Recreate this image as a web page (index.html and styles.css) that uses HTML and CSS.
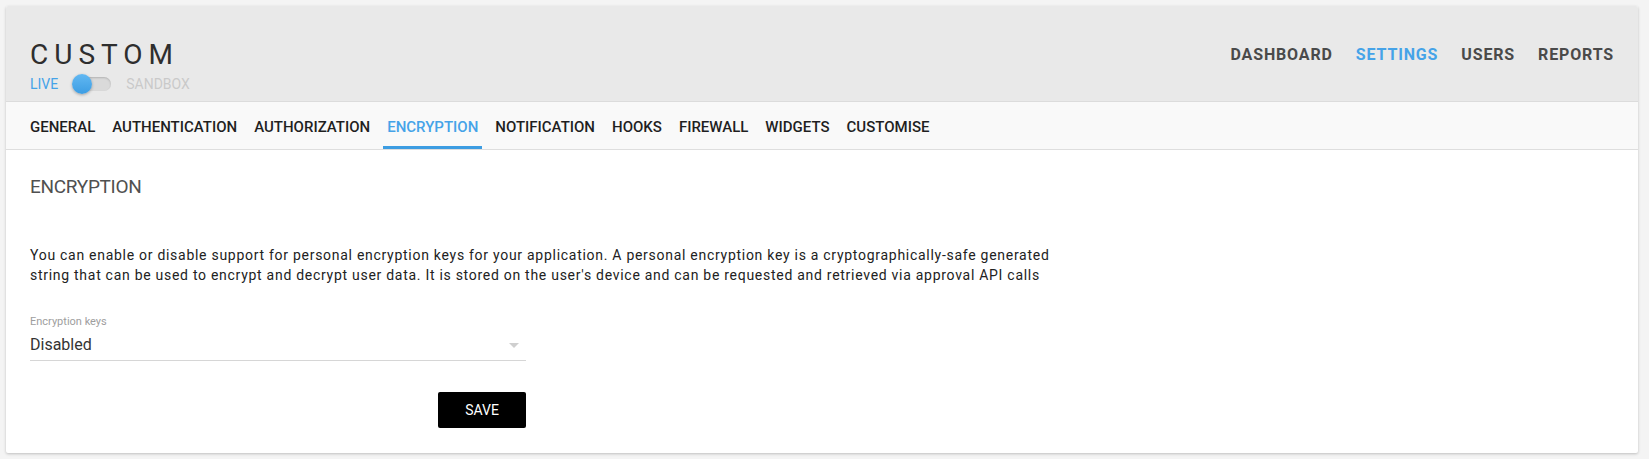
FILE: index.html
```html
<!DOCTYPE html>
<html lang="en">
<head>
<meta charset="UTF-8">
<meta name="viewport" content="width=device-width, initial-scale=1.0">
<title>Custom - Settings</title>
<link rel="stylesheet" href="styles.css">
</head>
<body>
<div class="card">
  <div class="header">
    <div class="brand">
      <div class="title">CUSTOM</div>
      <div class="mode">
        <span class="mode-live">LIVE</span>
        <span class="switch">
          <span class="switch-track"></span>
          <span class="switch-knob"></span>
        </span>
        <span class="mode-sandbox">SANDBOX</span>
      </div>
    </div>
    <div class="nav">
      <a href="#">DASHBOARD</a>
      <a href="#" class="active">SETTINGS</a>
      <a href="#">USERS</a>
      <a href="#">REPORTS</a>
    </div>
  </div>

  <div class="tabs">
    <a href="#" class="tab">GENERAL</a>
    <a href="#" class="tab">AUTHENTICATION</a>
    <a href="#" class="tab">AUTHORIZATION</a>
    <a href="#" class="tab active">ENCRYPTION</a>
    <a href="#" class="tab">NOTIFICATION</a>
    <a href="#" class="tab">HOOKS</a>
    <a href="#" class="tab">FIREWALL</a>
    <a href="#" class="tab">WIDGETS</a>
    <a href="#" class="tab">CUSTOMISE</a>
  </div>

  <div class="content">
    <h2>ENCRYPTION</h2>
    <p>You can enable or disable support for personal encryption keys for your application. A personal encryption key is a cryptographically-safe generated string that can be used to encrypt and decrypt user data. It is stored on the user's device and can be requested and retrieved via approval API calls</p>

    <form class="form">
      <label for="keys">Encryption keys</label>
      <div class="select">
        <span id="keys">Disabled</span>
        <span class="arrow"></span>
      </div>
      <div class="actions">
        <button type="submit">SAVE</button>
      </div>
    </form>
  </div>
</div>
</body>
</html>
```

FILE: styles.css
```css
body {
  margin: 0;
  background: #f4f4f4;
  font-family: Roboto, "Liberation Sans", sans-serif;
}

a {
  text-decoration: none;
}

.card {
  margin: 6px;
  width: 1632px;
  background: #fff;
  border-radius: 2px;
  box-shadow: 0 1px 3px rgba(0, 0, 0, 0.22);
  overflow: hidden;
}

.header {
  display: flex;
  justify-content: space-between;
  align-items: flex-start;
  height: 96px;
  box-sizing: border-box;
  padding: 33px 24px 0 24px;
  background: #e9e9e9;
  border-bottom: 1px solid #dcdcdc;
}

.title {
  font-size: 28px;
  line-height: 32px;
  font-weight: 400;
  letter-spacing: 6px;
  color: #2e2e2e;
}

.mode {
  display: flex;
  align-items: center;
  gap: 14px;
  height: 20px;
  margin-top: 3px;
  font-size: 14px;
  line-height: 20px;
}

.mode-live {
  color: #45a3e8;
}

.mode-sandbox {
  color: #c9c9c9;
}

.switch {
  position: relative;
  width: 40px;
  height: 20px;
}

.switch-track {
  position: absolute;
  left: 3px;
  top: 3px;
  width: 36px;
  height: 14px;
  border-radius: 7px;
  background: #dadada;
  box-shadow: inset 0 1px 2px rgba(0, 0, 0, 0.18);
}

.switch-knob {
  position: absolute;
  left: 0;
  top: 0;
  width: 20px;
  height: 20px;
  border-radius: 50%;
  background: linear-gradient(to bottom, #62b8f2, #3c9de3);
  box-shadow: 0 1px 3px rgba(0, 0, 0, 0.3);
}

.nav {
  display: flex;
  gap: 23px;
  margin-top: 6px;
}

.nav a {
  font-size: 16px;
  line-height: 20px;
  font-weight: 700;
  letter-spacing: 0.85px;
  color: #4a4a4a;
}

.nav a.active {
  color: #45a3e8;
}

.tabs {
  display: flex;
  gap: 9px;
  padding: 0 20px;
  background: #f9f9f9;
  border-bottom: 1px solid #dedede;
}

.tab {
  padding: 15px 4px 9px 4px;
  border-bottom: 3px solid transparent;
  font-size: 15px;
  line-height: 20px;
  font-weight: 500;
  color: #1f1f1f;
}

.tab.active {
  color: #45a3e8;
  border-bottom-color: #3d9de2;
}

.content {
  padding: 25px 24px 25px 24px;
}

.content h2 {
  margin: 0;
  font-size: 19px;
  line-height: 24px;
  font-weight: 400;
  letter-spacing: -0.3px;
  color: #505050;
}

.content p {
  margin: 46px 0 0 0;
  max-width: 1030px;
  font-size: 14px;
  line-height: 20px;
  letter-spacing: 0.72px;
  color: #222;
}

.form {
  width: 496px;
  margin-top: 30px;
}

.form label {
  display: block;
  font-size: 11px;
  line-height: 14px;
  color: #9e9e9e;
}

.select {
  display: flex;
  justify-content: space-between;
  align-items: center;
  margin-top: 4px;
  padding-bottom: 3px;
  border-bottom: 1px solid #d6d6d6;
  font-size: 16px;
  line-height: 24px;
  color: #333;
}

.arrow {
  width: 0;
  height: 0;
  margin-right: 7px;
  border-left: 5px solid transparent;
  border-right: 5px solid transparent;
  border-top: 5px solid #cfcfcf;
}

.actions {
  display: flex;
  justify-content: flex-end;
  margin-top: 31px;
}

.actions button {
  width: 88px;
  height: 36px;
  border: none;
  border-radius: 2px;
  background: #000;
  color: #fff;
  font-family: Roboto, "Liberation Sans", sans-serif;
  font-size: 14px;
  cursor: pointer;
}
```
